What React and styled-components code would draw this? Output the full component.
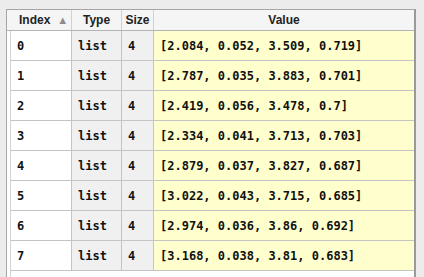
import React from 'react';
import styled, { createGlobalStyle } from "styled-components";

const GlobalStyle = createGlobalStyle`
    html, body {
        margin: 0;
        padding: 0;
        background: #ececec;
        overflow: hidden;
    }
`;

const Page = styled.div`
    padding: 9px 8px 0 6px;
    height: 277px;
    box-sizing: border-box;
    overflow: hidden;
`;

const Frame = styled.div`
    display: flex;
    flex-direction: column;
    border: 1px solid #a6a6a6;
    border-right: 2px solid #9a9a9a;
    border-bottom: none;
    background: #fff;
    height: 100%;
    box-sizing: border-box;
`;

const HeaderRow = styled.div`
    display: grid;
    grid-template-columns: 65px 50px 32px 1fr;
    height: 20px;
    flex-shrink: 0;
    background: #f5f5f5;
    border-bottom: 1px solid #b4b4b4;
    font-family: "Liberation Sans", Arial, sans-serif;
    font-size: 12px;
    font-weight: 600;
    color: #222;
`;

const HeaderCell = styled.div`
    display: flex;
    align-items: center;
    justify-content: ${props => props.$left ? 'flex-start' : 'center'};
    padding-left: ${props => props.$left ? '12px' : '0'};
    border-right: ${props => props.$last ? 'none' : '1px solid #d0d0d0'};
    box-sizing: border-box;
`;

const SortArrow = styled.span`
    color: #8c8c8c;
    font-size: 11px;
    margin-left: 7px;
`;

const Body = styled.div`
    flex: 1;
    padding-left: 3px;
    display: flex;
`;

const Rows = styled.div`
    flex: 1;
    border-left: 1px solid #d4d4d4;
`;

const Row = styled.div`
    display: grid;
    grid-template-columns: 61px 50px 32px 1fr;
    height: 30px;
    border-bottom: 1px solid #c4c4c4;
    box-sizing: border-box;
    font-family: "DejaVu Sans Mono", "Liberation Mono", monospace;
    font-size: 12px;
    font-weight: bold;
    color: #111;
`;

const Cell = styled.div`
    display: flex;
    align-items: center;
    padding-left: ${props => props.$pad || 6}px;
    background: ${props => props.$bg || '#fff'};
    border-right: ${props => props.$last ? 'none' : '1px solid #c4c4c4'};
    box-sizing: border-box;
    white-space: nowrap;
`;

const data = [
    [2.084, 0.052, 3.509, 0.719],
    [2.787, 0.035, 3.883, 0.701],
    [2.419, 0.056, 3.478, 0.7],
    [2.334, 0.041, 3.713, 0.703],
    [2.879, 0.037, 3.827, 0.687],
    [3.022, 0.043, 3.715, 0.685],
    [2.974, 0.036, 3.86, 0.692],
    [3.168, 0.038, 3.81, 0.683],
];

function App() {
    return (
        <Page>
            <GlobalStyle />
            <Frame>
                <HeaderRow>
                    <HeaderCell $left>Index<SortArrow>▲</SortArrow></HeaderCell>
                    <HeaderCell>Type</HeaderCell>
                    <HeaderCell>Size</HeaderCell>
                    <HeaderCell $last>Value</HeaderCell>
                </HeaderRow>
                <Body>
                    <Rows>
                        {data.map((v, i) => (
                            <Row key={i}>
                                <Cell $pad={6}>{i}</Cell>
                                <Cell $bg="#f0f0f0">list</Cell>
                                <Cell $bg="#f0f0f0">4</Cell>
                                <Cell $bg="#ffffcd" $last>[{v.join(', ')}]</Cell>
                            </Row>
                        ))}
                    </Rows>
                </Body>
            </Frame>
        </Page>
    )
}
export default App;
